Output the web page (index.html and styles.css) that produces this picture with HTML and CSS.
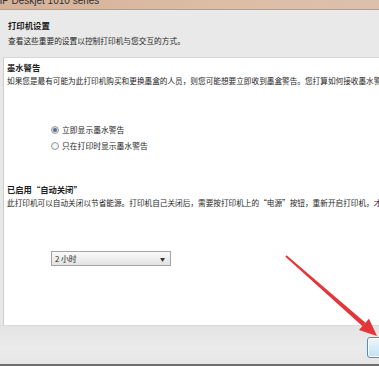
FILE: index.html
```html
<!DOCTYPE html>
<html lang="zh-CN">
<head>
    <meta charset="UTF-8">
    <meta name="viewport" content="width=device-width, initial-scale=1.0">
    <title>HP Deskjet 1010 series</title>
    <link rel="stylesheet" href="styles.css">
</head>
<body>
	<div class="window">
		<div class="titlebar"><span class="titleText">HP Deskjet 1010 series</span></div>

		<div class="header">
			<div class="headTitle">打印机设置</div>
			<div class="headSub">查看这些重要的设置以控制打印机与您交互的方式。</div>
		</div>

		<div class="panel">
			<div class="secTitle">墨水警告</div>
			<div class="secText">如果您是最有可能为此打印机购买和更换墨盒的人员，则您可能想要立即收到墨盒警告。您打算如何接收墨水警告？</div>

			<ul class="radios">
				<li><span class="radio checked"></span>立即显示墨水警告</li>
				<li><span class="radio"></span>只在打印时显示墨水警告</li>
			</ul>

			<div class="secTitle second">已启用“自动关闭”</div>
			<div class="secText">此打印机可以自动关闭以节省能源。打印机自己关闭后，需要按打印机上的“电源”按钮，重新开启打印机，才能继续打印。</div>

			<div class="select">
				<span>2 小时</span>
				<span class="caret">▼</span>
			</div>
		</div>

		<div class="footer">
			<div class="btn"></div>
		</div>
		<div class="bottomLine"></div>
	</div>

	<!-- red arrow pointing at the button -->
	<svg class="arrow" width="379" height="366" viewBox="0 0 379 366">
		<polygon points="285.4,256.7 286.6,255.3 365.5,322.8 362.5,326.2" fill="#e2363a" />
		<polygon points="377,336 359,330 369,318.8" fill="#e2363a" />
	</svg>
</body>
</html>
```

FILE: styles.css
```css
html, body { margin: 0; padding: 0; }
body { width: 379px; height: 366px; overflow: hidden; position: relative; background: #e8e8e8; font-family: "Noto Sans CJK SC", "Liberation Sans", sans-serif; color: #1e1e1e; }

.window { width: 379px; height: 366px; display: flex; flex-direction: column; }

.titlebar { height: 9px; flex-shrink: 0; overflow: hidden; background: linear-gradient(to right, #d6b199, #ddbda6 60%, #dcc0ac); border-bottom: 1px solid #a9a096; }
.titleText { display: block; margin-top: -5px; margin-left: -5px; font-family: "Liberation Sans", sans-serif; font-size: 10px; line-height: 12px; color: #2e2e2e; white-space: nowrap; }

.header { height: 47px; flex-shrink: 0; background: #e9e9e9; padding: 9px 0 0 8px; box-sizing: border-box; white-space: nowrap; }
.headTitle { font-size: 8.4px; font-weight: bold; line-height: 12px; }
.headSub { font-size: 7.7px; line-height: 12px; margin-top: 4px; }

.panel { height: 268px; flex-shrink: 0; margin-left: 3px; background: #fff; border-left: 1px solid #cdcdcd; border-top: 1px solid #d8d8d8; box-sizing: border-box; padding: 3px 0 0 3px; white-space: nowrap; overflow: hidden; }

.secTitle { font-size: 8.3px; font-weight: bold; line-height: 12px; }
.secTitle.second { margin-top: 31px; }
.secText { font-size: 7.65px; line-height: 12px; margin-top: 2px; }

.radios { list-style-type: none; margin: 37px 0 0 44px; padding: 0; font-size: 7.8px; line-height: 12px; }
.radios > li { display: flex; align-items: center; gap: 3px; }
.radios > li + li { margin-top: 4px; }
.radio { width: 6px; height: 6px; border-radius: 50%; border: 1px solid #9a9a9a; background: radial-gradient(circle, #fff, #e4e4e4); }
.radio.checked { background: radial-gradient(circle, #4a5f7a 0, #6f86a2 1.8px, #e6e6e6 2.6px); }

.select { margin: 42px 0 0 44px; width: 120px; height: 15px; box-sizing: border-box; border: 1px solid #a3a3a3; background: linear-gradient(#fafafa, #e2e2e2); display: flex; align-items: center; justify-content: space-between; padding: 0 5px 0 3px; font-size: 7.8px; }
.caret { font-size: 5px; color: #333; }

.footer { height: 39px; flex-shrink: 0; border-top: 1px solid #dadada; box-sizing: border-box; background: linear-gradient(#e4e4e4, #ebebeb 60%, #e6e6e6); padding: 11px 0 0 367px; overflow: hidden; }
.btn { width: 60px; height: 21px; box-sizing: border-box; border: 1px solid #4f8fc4; border-radius: 3px; background: linear-gradient(#eef7fd, #d7ecf9 50%, #c2e0f4); box-shadow: inset 0 0 0 1px #f6fbff; }

.bottomLine { height: 2px; flex-shrink: 0; background: #6d6d6d; }

.arrow { position: absolute; left: 0; top: 0; }
```
